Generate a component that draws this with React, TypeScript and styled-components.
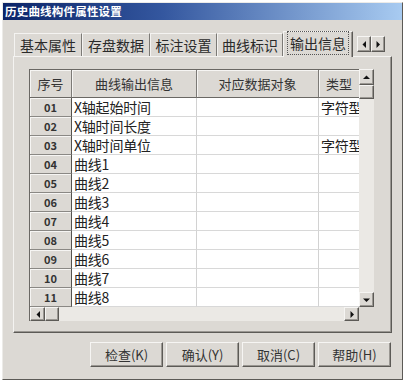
import React from 'react';
import styled, { createGlobalStyle } from 'styled-components';

const FONT = `"Noto Sans CJK SC", "Liberation Sans", sans-serif`;
const BG = '#dcd9d4';
const DARK = '#5c5a56';
const SHADE = '#9a9792';

const Global = createGlobalStyle`
  html, body { margin: 0; padding: 0; background: #fff; }
  body { font-family: ${FONT}; color: #222; }
`;

const Window = styled.div`
  margin: 2px 0 0 2px;
  width: 401px;
  height: 378px;
  box-sizing: border-box;
  background: ${BG};
  border: 1px solid;
  border-color: #ecebe8 ${DARK} ${DARK} #ecebe8;
  display: flex;
  flex-direction: column;
`;

const TitleBar = styled.div`
  height: 17px;
  flex: none;
  background: linear-gradient(to right, #0b2468 0%, #34579f 40%, #a8cbf1 100%);
  color: #fff;
  font: bold 11.5px/17px ${FONT};
  padding-left: 2px;
  letter-spacing: 0.2px;
`;

const Content = styled.div`
  padding: 11px 0 0 10px;
  display: flex;
  flex-direction: column;
`;

const TabStrip = styled.div`
  display: flex;
  align-items: flex-end;
  height: 25px;
  padding-left: 1px;
`;

const Tab = styled.div<{ $w: number; $active?: boolean }>`
  width: ${p => p.$w}px;
  height: ${p => (p.$active ? 26 : 23)}px;
  margin-bottom: ${p => (p.$active ? -1 : 0)}px;
  box-sizing: border-box;
  position: relative;
  z-index: ${p => (p.$active ? 1 : 0)};
  background: ${BG};
  border-top: 1px solid #f4f3f1;
  border-left: 1px solid #f4f3f1;
  border-right: 1px solid ${p => (p.$active ? DARK : '#7c7a76')};
  box-shadow: ${p => (p.$active ? `inset -1px 0 0 ${SHADE}` : 'none')};
  display: flex;
  align-items: center;
  justify-content: center;
  font: 14px ${FONT};
  color: #2a2a2a;
  padding-bottom: ${p => (p.$active ? 3 : 0)}px;
`;

const Focus = styled.span`
  outline: 1px dotted #555;
  outline-offset: 1px;
  padding: 0 1px;
`;

const TabArrows = styled.div`
  display: flex;
  align-self: flex-start;
  margin: 5px 0 0 4px;
`;

const ArrowBtn = styled.div<{ $w?: number; $h?: number }>`
  width: ${p => p.$w ?? 14}px;
  height: ${p => p.$h ?? 16}px;
  box-sizing: border-box;
  background: ${BG};
  border: 1px solid;
  border-color: #f6f5f3 ${DARK} ${DARK} #f6f5f3;
  box-shadow: inset -1px -1px 0 ${SHADE};
  display: flex;
  align-items: center;
  justify-content: center;
  flex: none;
`;

const Panel = styled.div`
  width: 379px;
  height: 277px;
  box-sizing: border-box;
  border: 1px solid;
  border-color: #f4f3f1 ${DARK} ${DARK} #f4f3f1;
  box-shadow: inset -1px -1px 0 ${SHADE};
  padding: 12px 0 0 15px;
`;

const GridFrame = styled.div`
  display: grid;
  grid-template-columns: 330px 15px;
  grid-template-rows: 238px 14px;
  width: 345px;
`;

const TableArea = styled.div`
  overflow: hidden;
  background: #fff;
  display: flex;
  flex-direction: column;
`;

const COLS = '42px 125px 122px 41px';

const HeaderRow = styled.div`
  display: grid;
  grid-template-columns: ${COLS};
  height: 28px;
  flex: none;
  border-top: 1px solid #6a6864;
  border-left: 1px solid #6a6864;
`;

const HeaderCell = styled.div`
  background: ${BG};
  box-sizing: border-box;
  border-right: 1px solid #7c7a76;
  border-bottom: 1px solid #6a6864;
  box-shadow: inset 1px 1px 0 #f6f5f3;
  display: flex;
  align-items: center;
  justify-content: center;
  font: 13px ${FONT};
  color: #333;
  white-space: nowrap;
  overflow: hidden;
`;

const Row = styled.div`
  display: grid;
  grid-template-columns: ${COLS};
  height: 19px;
  flex: none;
  border-left: 1px solid #6a6864;
`;

const IndexCell = styled.div`
  background: ${BG};
  box-sizing: border-box;
  border-right: 1px solid #55534f;
  border-bottom: 1px solid #8a8884;
  box-shadow: inset 1px 1px 0 #f6f5f3;
  display: flex;
  align-items: center;
  justify-content: center;
  font: bold 11px ${FONT};
  color: #333;
`;

const DataCell = styled.div`
  box-sizing: border-box;
  border-right: 1px solid #d2d2d2;
  border-bottom: 1px solid #d8d8d8;
  padding-left: 2px;
  display: flex;
  align-items: center;
  font: 14px ${FONT};
  letter-spacing: -0.2px;
  color: #222;
  white-space: nowrap;
  overflow: hidden;
`;

const VScroll = styled.div`
  display: flex;
  flex-direction: column;
  background: #ebe9e5;
`;

const HScroll = styled.div`
  display: flex;
  background: #ebe9e5;
  border-left: 1px solid #6a6864;
`;

const Track = styled.div`
  flex: 1;
`;

const Corner = styled.div`
  background: ${BG};
`;

const ButtonRow = styled.div`
  display: flex;
  gap: 3px;
  margin: 9px 0 0 77px;
`;

const Button = styled.div`
  width: 73px;
  height: 25px;
  box-sizing: border-box;
  background: ${BG};
  border: 1px solid;
  border-color: #f6f5f3 ${DARK} ${DARK} #f6f5f3;
  box-shadow: inset -1px -1px 0 ${SHADE};
  display: flex;
  align-items: center;
  justify-content: center;
  font: 13px ${FONT};
  color: #333;
`;

type Dir = 'up' | 'down' | 'left' | 'right';
const Tri: React.FC<{ dir: Dir }> = ({ dir }) => {
  const pts: Record<Dir, string> = {
    up: '0,4 3.5,0.5 7,4',
    down: '0,0.5 3.5,4 7,0.5',
    left: '4,0 0.5,3.5 4,7',
    right: '0.5,0 4,3.5 0.5,7',
  };
  const vertical = dir === 'up' || dir === 'down';
  return (
    <svg width={vertical ? 7 : 4} height={vertical ? 4 : 7} viewBox={vertical ? '0 0 7 4' : '0 0 4 7'}>
      <polygon points={pts[dir]} fill="#111" />
    </svg>
  );
};

const rows: [string, string, string][] = [
  ['01', 'X轴起始时间', '字符型'],
  ['02', 'X轴时间长度', ''],
  ['03', 'X轴时间单位', '字符型'],
  ['04', '曲线1', ''],
  ['05', '曲线2', ''],
  ['06', '曲线3', ''],
  ['07', '曲线4', ''],
  ['08', '曲线5', ''],
  ['09', '曲线6', ''],
  ['10', '曲线7', ''],
  ['11', '曲线8', ''],
];

const tabs: [string, number][] = [
  ['基本属性', 68],
  ['存盘数据', 68],
  ['标注设置', 67],
  ['曲线标识', 66],
];

export default function App() {
  return (
    <>
      <Global />
      <Window>
        <TitleBar>历史曲线构件属性设置</TitleBar>
        <Content>
          <TabStrip>
            {tabs.map(([t, w]) => (
              <Tab key={t} $w={w}>{t}</Tab>
            ))}
            <Tab $w={70} $active>
              <Focus>输出信息</Focus>
            </Tab>
            <TabArrows>
              <ArrowBtn><Tri dir="left" /></ArrowBtn>
              <ArrowBtn><Tri dir="right" /></ArrowBtn>
            </TabArrows>
          </TabStrip>
          <Panel>
            <GridFrame>
              <TableArea>
                <HeaderRow>
                  <HeaderCell>序号</HeaderCell>
                  <HeaderCell>曲线输出信息</HeaderCell>
                  <HeaderCell>对应数据对象</HeaderCell>
                  <HeaderCell>类型</HeaderCell>
                </HeaderRow>
                {rows.map(([n, info, type]) => (
                  <Row key={n}>
                    <IndexCell>{n}</IndexCell>
                    <DataCell>{info}</DataCell>
                    <DataCell />
                    <DataCell>{type}</DataCell>
                  </Row>
                ))}
              </TableArea>
              <VScroll>
                <ArrowBtn $w={15} $h={16}><Tri dir="up" /></ArrowBtn>
                <ArrowBtn $w={15} $h={14} />
                <Track />
                <ArrowBtn $w={15} $h={15}><Tri dir="down" /></ArrowBtn>
              </VScroll>
              <HScroll>
                <ArrowBtn $w={15} $h={14}><Tri dir="left" /></ArrowBtn>
                <ArrowBtn $w={14} $h={14} />
                <Track />
                <ArrowBtn $w={15} $h={14}><Tri dir="right" /></ArrowBtn>
              </HScroll>
              <Corner />
            </GridFrame>
          </Panel>
          <ButtonRow>
            <Button>检查(K)</Button>
            <Button>确认(Y)</Button>
            <Button>取消(C)</Button>
            <Button>帮助(H)</Button>
          </ButtonRow>
        </Content>
      </Window>
    </>
  );
}
